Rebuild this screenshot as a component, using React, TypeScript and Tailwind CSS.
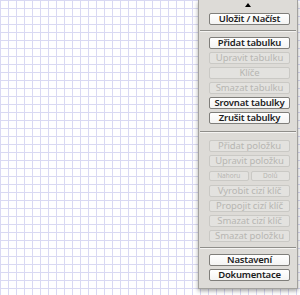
import type { ReactNode } from 'react'

const font = { fontFamily: '"Noto Sans", "DejaVu Sans", sans-serif' }

function Btn({ children, off }: { children: ReactNode; off?: boolean }) {
  return (
    <button
      className={
        off
          ? 'flex h-[12px] w-full items-center justify-center rounded-[2px] border border-[#cac9c5] bg-[#e3e2df] text-[9.5px] leading-none tracking-[-0.1px] text-[#b7b6b2]'
          : 'flex h-[12px] w-full items-center justify-center rounded-[2px] border border-[#7f7e7a] bg-[linear-gradient(#ffffff,#f4f4f3)] text-[9.5px] font-semibold leading-none tracking-[-0.2px] text-[#1d1d1d]'
      }
    >
      {children}
    </button>
  )
}

function Sep({ className }: { className: string }) {
  return <div className={`-ml-[9px] -mr-[6px] h-[2px] border-t border-b border-t-[#8f8e8a] border-b-[#f5f4f2] ${className}`} />
}

function Small({ children }: { children: ReactNode }) {
  return (
    <button className="flex h-[10px] flex-1 items-center justify-center rounded-[2px] border border-[#cac9c5] bg-[#e3e2df] text-[6.5px] leading-none text-[#b7b6b2]">
      {children}
    </button>
  )
}

export default function App() {
  return (
    <div
      className="relative h-[295px] w-[300px] overflow-hidden bg-white bg-[linear-gradient(to_right,#d9d9f3_1px,transparent_1px),linear-gradient(to_bottom,#d9d9f3_1px,transparent_1px)] bg-[size:8px_8px]"
      style={font}
    >
      <div className="absolute left-[198px] top-0 h-[289px] w-[100px] border-x border-b border-[#a3a29e] bg-[#dddbd7] shadow-[0_2px_4px_rgba(0,0,0,0.35)]">
        <div className="flex h-[13px] items-center justify-center pb-[4px]">
          <div className="h-0 w-0 border-x-[3px] border-b-[4px] border-x-transparent border-b-black" />
        </div>
        <div className="flex flex-col gap-[3px] pl-[10px] pr-[7px]">
          <Btn>Uložit / Načíst</Btn>
          <Sep className="my-[2px]" />
          <Btn>Přidat tabulku</Btn>
          <Btn off>Upravit tabulku</Btn>
          <Btn off>Klíče</Btn>
          <Btn off>Smazat tabulku</Btn>
          <Btn>Srovnat tabulky</Btn>
          <Btn>Zrušit tabulky</Btn>
          <Sep className="my-[4px]" />
          <Btn off>Přidat položku</Btn>
          <Btn off>Upravit položku</Btn>
          <div className="flex h-[12px] items-center gap-[2px]">
            <Small>Nahoru</Small>
            <Small>Dolů</Small>
          </div>
          <Btn off>Vyrobit cizí klíč</Btn>
          <Btn off>Propojit cizí klíč</Btn>
          <Btn off>Smazat cizí klíč</Btn>
          <Btn off>Smazat položku</Btn>
          <Sep className="my-[2px]" />
          <Btn>Nastavení</Btn>
          <Btn>Dokumentace</Btn>
        </div>
      </div>
    </div>
  )
}
